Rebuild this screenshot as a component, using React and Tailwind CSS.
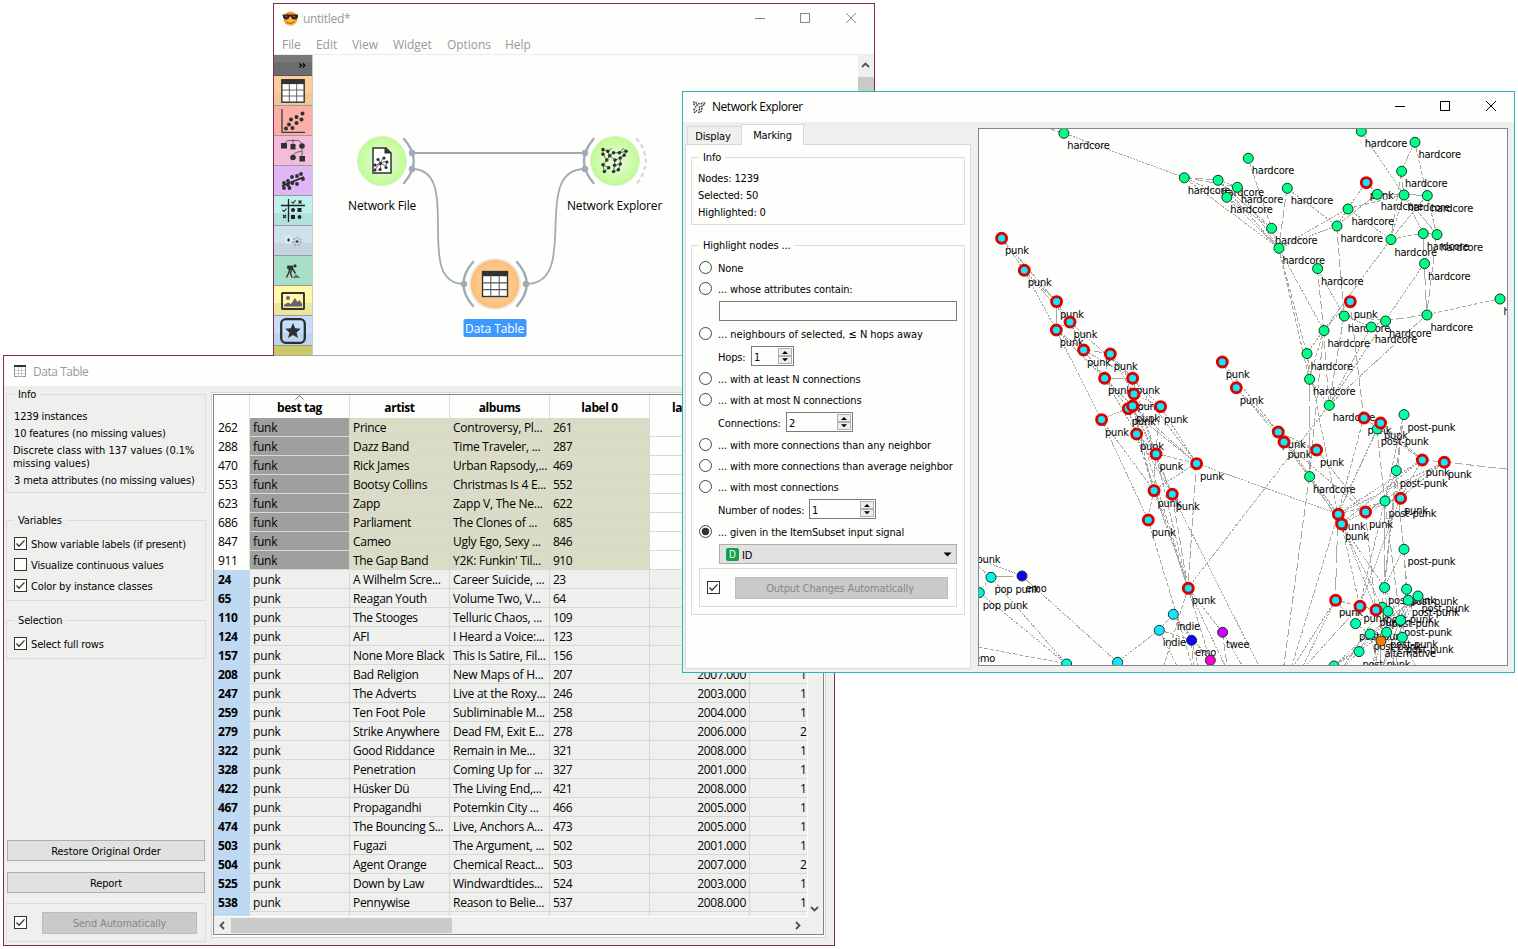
import React from 'react';

const UI = "[font-family:'Open_Sans','Noto_Sans',sans-serif] text-[12px] tracking-[-0.3px]";
const SMALL = "[font-family:'DejaVu_Sans_Condensed','DejaVu_Sans',sans-serif] text-[11px] leading-[13px] tracking-[-0.15px]";

/* ---------- shared controls ---------- */

function WindowButtons({ className }) {
  return (
    <svg width="102" height="12" viewBox="0 0 102 12" fill="none" stroke="currentColor" shapeRendering="crispEdges" className={className}>
      <path d="M0 5.5H10" />
      <rect x="45.5" y="0.5" width="9" height="9" />
      <path d="M91 0L101 10M101 0L91 10" shapeRendering="auto" />
    </svg>
  );
}

function Group({ title, className = '', children }) {
  return (
    <fieldset className={`border border-[#dadcda] ${className}`}>
      <legend className="ml-[7px] h-[14px] px-[4px] leading-[16px]">{title}</legend>
      {children}
    </fieldset>
  );
}

function CheckBox({ checked }) {
  return (
    <svg width="13" height="13" viewBox="0 0 13 13" className="shrink-0">
      <rect x="0.5" y="0.5" width="12" height="12" fill="#fefefd" stroke="#333" />
      {checked && <path d="M2.5 6.5L5 9.2L10.5 3.4" fill="none" stroke="#333" strokeWidth="1.3" />}
    </svg>
  );
}

function CheckRow({ checked, children }) {
  return (
    <div className="flex h-[13px] items-center gap-[4px] whitespace-nowrap">
      <CheckBox checked={checked} />
      <span className="pt-[2px]">{children}</span>
    </div>
  );
}

function RadioRow({ checked, className = '', children }) {
  return (
    <div className={`flex h-[14px] items-center gap-[5px] whitespace-nowrap ${className}`}>
      <svg width="14" height="14" viewBox="0 0 14 14" className="shrink-0">
        <circle cx="6.5" cy="6.5" r="6" fill="#fefefd" stroke="#444" />
        {checked && <circle cx="6.5" cy="6.5" r="3.7" fill="#333" />}
      </svg>
      <span>{children}</span>
    </div>
  );
}

function SpinRow({ label, value, labelClass, boxClass }) {
  return (
    <div className="mt-[5px] flex h-[20px] items-center pl-[19px]">
      <span className={`pt-[2px] whitespace-nowrap ${labelClass}`}>{label}</span>
      <div className={`flex h-[20px] items-center justify-between border border-[#7a7a7a] bg-[#fefefd] pr-px pl-[2px] ${boxClass}`}>
        <span className="pt-[2px]">{value}</span>
        <svg width="14" height="16" viewBox="0 0 14 16">
          <rect x="0.5" y="0.5" width="13" height="7" fill="#eceeec" stroke="#b0b2b0" />
          <rect x="0.5" y="8.5" width="13" height="7" fill="#eceeec" stroke="#b0b2b0" />
          <path d="M4 6L7 3L10 6Z M4 10.2L7 13.2L10 10.2Z" fill="#000" />
        </svg>
      </div>
    </div>
  );
}

/* ---------- icons ---------- */

function TableGlyph({ size }) {
  return (
    <svg width={size} height={size} viewBox="0 0 24 24">
      <rect x="0.8" y="0.8" width="22.4" height="22.4" fill="#fff" stroke="#333" strokeWidth="1.4" />
      <rect x="0.5" y="0.5" width="23" height="4.6" fill="#333" />
      <path d="M8.3 5V23M15.7 5V23M1 11H23M1 17H23" stroke="#555" strokeWidth="0.9" />
    </svg>
  );
}

function Dots({ points, r = 1.8 }) {
  return points.map(([x, y]) => <circle key={`${x},${y}`} cx={x} cy={y} r={r} fill="#2e322e" />);
}

const NET_POINTS = [[2, 1], [7, 3], [2, 6], [9, 7.5], [13, 4.5], [19, 4.5], [26, 3], [6, 12], [14.5, 12], [20, 10], [24, 7], [2, 17], [8, 20], [14, 17.5], [20, 16], [3.5, 24], [13, 24], [18, 22]];

function NetGlyph({ size }) {
  return (
    <svg width={size} height={size} viewBox="0 0 29 26">
      <path d="M2 1L7 3L9 7.5L13 4.5L19 4.5L26 3L24 7L20 10L14.5 12L9 7.5L6 12L2 6L2 1M6 12L2 17L8 20L3.5 24L2 17M14.5 12L14 17.5L20 16L20 10M14 17.5L13 24L18 22L20 16M7 3L11 0M19 4.5L23 0L26 3" fill="none" stroke="#3c403c" strokeWidth="0.8" />
      <Dots points={NET_POINTS} />
    </svg>
  );
}

const TOOLS = [
  { bg: 'bg-linear-to-b from-[#ffcd98] from-60% to-[#f0c795] to-60%', icon: <TableGlyph size={24} /> },
  {
    bg: 'bg-[#fcafa8]',
    icon: (
      <svg width="24" height="24" viewBox="0 0 24 24">
        <path d="M1 0V23.3H24" fill="none" stroke="#3c3c3c" strokeWidth="1.3" />
        <Dots points={[[5, 19.5], [8, 15.5], [11.5, 19], [10, 10.5], [15.5, 14], [15.5, 8], [20.5, 10.5], [21.5, 4.5]]} r={2} />
      </svg>
    ),
  },
  {
    bg: 'bg-[#f5bbdb]',
    icon: (
      <svg width="26" height="25" viewBox="0 0 26 25">
        <path d="M4 7Q5 2.500 10 2.500H17Q21 2.500 22 7M13 1V8M22 8V20M13 18Q14 13.500 22 13.500" fill="none" stroke="#666" />
        <path d="M1 5h6v5.500H1zM10.500 6h5v5.500h-5zM19.500 18h5.500v5.500h-5.500z" fill="#2e322e" />
        <circle cx="22" cy="8" r="2.800" fill="#2e322e" />
        <circle cx="13" cy="19.500" r="2.800" fill="#2e322e" />
      </svg>
    ),
  },
  {
    bg: 'bg-[#dfb6f6]',
    icon: (
      <svg width="24" height="20" viewBox="0 0 24 20">
        <path d="M1 15L23 6" stroke="#222" strokeWidth="1.500" />
        <Dots points={[[3, 12], [3, 17], [7, 10], [8.500, 17], [11, 6], [11.500, 12], [16, 13], [16, 5], [20, 3], [22, 8], [7, 14]]} r={1.9} />
      </svg>
    ),
  },
  {
    bg: 'bg-linear-to-b from-[#bdf1ed] from-60% to-[#b2e2de] to-60%',
    icon: (
      <svg width="24" height="24" viewBox="0 0 24 24">
        <path d="M0 6.500H24M7.500 0V23" stroke="#222" strokeWidth="1.300" />
        <path d="M10.500 2.800l1.500 1.500 2.500-3M1.500 11l1.500 1.500 2.500-3M17.500 1.500l3 3M20.500 1.500l-3 3M2 16l3 3M5 16l-3 3" fill="none" stroke="#222" strokeWidth="1.100" />
        <path d="M16.500 9h4v4h-4zM10 16h4v4h-4z" fill="#222" />
        <circle cx="12" cy="11" r="2" fill="#222" />
        <circle cx="18.500" cy="18" r="1.900" fill="#222" />
      </svg>
    ),
  },
  {
    bg: 'bg-linear-to-b from-[#cde1ed] from-60% to-[#c2d5e1] to-60%',
    icon: (
      <svg width="18" height="16" viewBox="0 0 18 16">
        <circle cx="4.500" cy="6.500" r="3.600" fill="none" stroke="#e4ebee" strokeWidth="2.500" strokeDasharray="2 1.200" />
        <circle cx="13" cy="8.500" r="3.800" fill="none" stroke="#a9b2b8" strokeWidth="2.500" strokeDasharray="1.800 1.600" />
        <path d="M3 7h3M4.500 5.500v3M11.500 8.500h3M13 7v3" stroke="#222" />
      </svg>
    ),
  },
  {
    bg: 'bg-[#a7dfc8]',
    icon: (
      <svg width="16" height="14" viewBox="0 0 16 14">
        <circle cx="10" cy="1.800" r="1.600" fill="#333" />
        <path d="M2.500 1.500L8.500 1.800L8 5.500L5 6.500L1.800 4Z" fill="#333" />
        <path d="M4.500 5L4 8L1.500 13.500M6.500 6L5.500 9L7 13.500M7 4L10.500 9.500" fill="none" stroke="#333" strokeWidth="1.400" />
        <path d="M7.500 14L11 10.200L15.500 14Z" fill="#5e7468" />
      </svg>
    ),
  },
  {
    bg: 'bg-linear-to-b from-[#fef8a8] from-60% to-[#ece79b] to-60%',
    icon: (
      <svg width="24" height="18" viewBox="0 0 24 18">
        <rect x="1" y="1" width="22" height="16" rx="0.500" fill="none" stroke="#333" strokeWidth="1.900" />
        <circle cx="7" cy="6" r="2" fill="#666" />
        <path d="M3 14.500V13L7 10.500L10 12L14 6L16.500 10L18.500 8L21 12V14.500Z" fill="#666" />
      </svg>
    ),
  },
  {
    bg: 'bg-linear-to-b from-[#c8ddfa] from-60% to-[#bed4ef] to-60%',
    icon: (
      <svg width="26" height="26" viewBox="0 0 26 26">
        <rect x="1.200" y="1.200" width="23.600" height="23.600" rx="4.500" fill="none" stroke="#2b2f33" strokeWidth="2.300" />
        <path d="M13 5L15.200 10.300L20.800 10.700L16.500 14.400L17.900 20L13 16.900L8.100 20L9.500 14.400L5.200 10.700L10.800 10.300Z" fill="#2b2f33" />
      </svg>
    ),
  },
];

/* ---------- workflow canvas window ---------- */

function Workflow() {
  return (
    <svg width="545" height="300" viewBox="313 55 545 300" className="shrink-0 text-[12px] [font-family:'Open_Sans','Noto_Sans',sans-serif]">
      <defs>
        <radialGradient id="green"><stop offset="0" stopColor="#e6fadb" /><stop offset="0.600" stopColor="#d3fbb5" /><stop offset="1" stopColor="#bffc90" /></radialGradient>
        <radialGradient id="orange"><stop offset="0" stopColor="#fde3c4" /><stop offset="0.700" stopColor="#fec78a" /><stop offset="1" stopColor="#febf78" /></radialGradient>
      </defs>
      <g fill="none" stroke="#9facb3">
        <path d="M412 153H585" strokeWidth="2.200" />
        <path d="M412 169C464 169 412 284 464 284M526 284C582 284 529 169 585 169" strokeWidth="1.800" />
        <g strokeWidth="2.400" strokeLinecap="round">
          <path d="M404 139Q423.500 161 404 183" />
          <path d="M473 262Q454 284 473 306" />
          <path d="M517 262Q536.500 284 517 306" />
          <path d="M593.500 139Q574.500 161 593.500 183" />
          <path d="M637 139Q654.500 161 637 183" stroke="#d9dbd9" strokeDasharray="2.500 5" />
        </g>
      </g>
      <g fill="#9facb3">
        <circle cx="412" cy="153" r="3.200" /><circle cx="412" cy="169" r="3.200" />
        <circle cx="585" cy="153" r="3.200" /><circle cx="585" cy="169" r="3.200" />
        <circle cx="464" cy="284" r="3.200" /><circle cx="526" cy="284" r="3.200" />
      </g>
      <circle cx="382" cy="161" r="24.500" fill="url(#green)" stroke="#d9e8d0" strokeWidth="0.800" />
      <circle cx="615" cy="161" r="24.500" fill="url(#green)" stroke="#d9e8d0" strokeWidth="0.800" />
      <circle cx="495" cy="284" r="26" fill="#e9eae8" />
      <circle cx="495" cy="284" r="24.300" fill="url(#orange)" />
      <g transform="translate(372 147)">
        <path d="M1 1H14L19 6V26H1Z" fill="#fff" stroke="#333" strokeWidth="1.500" />
        <path d="M12.500 0.500V6.500H19.500Z" fill="#333" />
        <path d="M3 19L8 16L6 12M8 16L12 10M8 16L14 19L15 14L8 16L9 23M2 24L8 16" stroke="#444" strokeWidth="0.800" fill="none" />
        <Dots points={[[6, 12.500], [12, 11], [8.500, 16.500], [15, 15], [3, 18], [8, 22.500], [14, 20.500], [3, 23]]} r={1.600} />
      </g>
      <g transform="translate(601 147)"><NetGlyph size={28} /></g>
      <g transform="translate(481.500 270.500)"><TableGlyph size={27} /></g>
      <rect x="463.500" y="319" width="63" height="18" rx="2" fill="#3d99fe" />
      <g textAnchor="middle">
        <text x="382" y="210" textLength="68">Network File</text>
        <text x="614.500" y="210" textLength="95">Network Explorer</text>
        <text x="494.500" y="333" fill="#fff" textLength="59">Data Table</text>
      </g>
    </svg>
  );
}

function CanvasWindow() {
  return (
    <section className={`absolute top-[3px] left-[273px] flex h-[400px] w-[602px] flex-col border border-[#862950] bg-[#fefefd] text-[#999] ${UI}`}>
      <header className="flex h-[30px] shrink-0 items-center pr-[17px] pl-[8px]">
        <svg width="17" height="17" viewBox="0 0 17 17" className="-mt-px">
          <circle cx="8.500" cy="8.500" r="7" fill="#f59a22" />
          <circle cx="9" cy="11" r="4.500" fill="#fcb540" />
          <path d="M0.500 4.500H16V7Q15 10 12 9.500Q9.500 9 9 6.500H7.500Q7 9.500 4 9.500Q1 9 0.500 4.500Z" fill="#2a2018" />
          <path d="M3 5.500l2 2M11 5.500l2 2" stroke="#9ab" />
          <path d="M5 12.500Q9 15 12.500 11.500" fill="none" stroke="#a04a10" />
        </svg>
        <span className="ml-[4px] grow tracking-[-0.3px]">untitled*</span>
        <WindowButtons className="text-[#888]" />
      </header>
      <nav className="flex h-[21px] shrink-0 items-center border-b border-[#ececec] pt-[2px] pl-[8px] tracking-[-0.05px]">
        <span className="w-[34px]">File</span>
        <span className="w-[36px]">Edit</span>
        <span className="w-[41px]">View</span>
        <span className="w-[54px]">Widget</span>
        <span className="w-[58px]">Options</span>
        <span>Help</span>
      </nav>
      <div className="flex min-h-0 grow">
        <aside className="flex w-[39px] shrink-0 flex-col border-r border-[#cacccb] bg-[#ccc866]">
          <div className="flex h-[21px] shrink-0 items-center justify-end border-b border-[#555] bg-linear-to-b from-[#787a78] from-35% to-[#696d6d] to-35% pr-[6px]">
            <svg width="7" height="5" viewBox="0 0 7 5" fill="none" stroke="#000" strokeWidth="1.200"><path d="M0.500 0.500L2.500 2.500L0.500 4.500M3.800 0.500L5.800 2.500L3.800 4.500" /></svg>
          </div>
          {TOOLS.map((tool, i) => (
            <div key={i} className={`flex h-[30px] shrink-0 items-center justify-center border-b border-[#9a9c9a] ${tool.bg}`}>{tool.icon}</div>
          ))}
        </aside>
        <Workflow />
        <div className="flex grow flex-col items-center bg-[#eff0ee]">
          <div className="flex h-[22px] shrink-0 items-center pr-px pb-[3px]">
            <svg width="9" height="6" viewBox="0 0 9 6" fill="none" stroke="#505250" strokeWidth="1.800"><path d="M1 5L4.500 1.500L8 5" /></svg>
          </div>
          <div className="mr-px h-[200px] w-full bg-[#c8cac8]" />
        </div>
      </div>
    </section>
  );
}

/* ---------- data table window ---------- */

const ROWS = [
  [262, 'funk', 'Prince', 'Controversy, Pl...', 261, '', ''],
  [288, 'funk', 'Dazz Band', 'Time Traveler, ...', 287, '', ''],
  [470, 'funk', 'Rick James', 'Urban Rapsody,...', 469, '', ''],
  [553, 'funk', 'Bootsy Collins', 'Christmas Is 4 E...', 552, '', ''],
  [623, 'funk', 'Zapp', 'Zapp V, The Ne...', 622, '', ''],
  [686, 'funk', 'Parliament', 'The Clones of ...', 685, '', ''],
  [847, 'funk', 'Cameo', 'Ugly Ego, Sexy ...', 846, '', ''],
  [911, 'funk', 'The Gap Band', "Y2K: Funkin' Til...", 910, '', ''],
  [24, 'punk', 'A Wilhelm Scre...', 'Career Suicide, ...', 23, '', ''],
  [65, 'punk', 'Reagan Youth', 'Volume Two, V...', 64, '', ''],
  [110, 'punk', 'The Stooges', 'Telluric Chaos, ...', 109, '', ''],
  [124, 'punk', 'AFI', 'I Heard a Voice:...', 123, '', ''],
  [157, 'punk', 'None More Black', 'This Is Satire, Fil...', 156, '', ''],
  [208, 'punk', 'Bad Religion', 'New Maps of H...', 207, '2007.000', 1],
  [247, 'punk', 'The Adverts', 'Live at the Roxy...', 246, '2003.000', 1],
  [259, 'punk', 'Ten Foot Pole', 'Subliminable M...', 258, '2004.000', 1],
  [279, 'punk', 'Strike Anywhere', 'Dead FM, Exit E...', 278, '2006.000', 2],
  [322, 'punk', 'Good Riddance', 'Remain in Me...', 321, '2008.000', 1],
  [328, 'punk', 'Penetration', 'Coming Up for ...', 327, '2001.000', 1],
  [422, 'punk', 'Hüsker Dü', 'The Living End,...', 421, '2008.000', 1],
  [467, 'punk', 'Propagandhi', 'Potemkin City ...', 466, '2005.000', 1],
  [474, 'punk', 'The Bouncing S...', 'Live, Anchors A...', 473, '2005.000', 1],
  [503, 'punk', 'Fugazi', 'The Argument, ...', 502, '2001.000', 1],
  [504, 'punk', 'Agent Orange', 'Chemical React...', 503, '2007.000', 2],
  [525, 'punk', 'Down by Law', 'Windwardtides...', 524, '2003.000', 1],
  [538, 'punk', 'Pennywise', 'Reason to Belie...', 537, '2008.000', 1],
  ['', 'none', '', '', '', '', ''],
];

const CELL = 'w-[100px] shrink-0 overflow-hidden whitespace-nowrap border-r border-b border-[#d6d8d6] pl-[3px]';

function TableRow({ row }) {
  const [id, tag, artist, albums, label, year, last] = row;
  const funk = tag === 'funk';
  const tint = funk ? 'bg-[#dadcc6]' : '';
  const plain = funk ? 'bg-[#fefefd]' : '';
  return (
    <div className="flex h-[19px] shrink-0 leading-[20px]">
      <div className={`w-[36px] shrink-0 border-r pl-[4px] leading-[19px] ${funk ? 'border-[#dddfdd] bg-[#fefefd]' : 'border-[#bfd9f3] bg-[#bfd9f3] font-bold'}`}>{id}</div>
      <div className={`${CELL} tracking-[-0.15px] ${funk ? 'bg-[#9ea09d]' : ''}`}>{tag === 'none' ? '' : tag}</div>
      <div className={`${CELL} ${tint}`}>{artist}</div>
      <div className={`${CELL} tracking-[-0.25px] ${tint}`}>{albums}</div>
      <div className={`${CELL} tracking-[-0.5px] ${tint}`}>{label}</div>
      <div className={`${CELL} pr-[3px] text-right ${plain}`}>{year}</div>
      <div className={`w-[57px] shrink-0 overflow-hidden border-b border-[#d6d8d6] pl-[50px] ${plain}`}>{last}</div>
    </div>
  );
}

function HeaderCell({ children, className = 'text-center' }) {
  return <div className={`w-[100px] shrink-0 border-r border-[#dcdedc] pt-[2px] ${className}`}>{children}</div>;
}

function DataTableWindow() {
  return (
    <section className="absolute top-[355px] left-[3px] flex h-[591px] w-[832px] flex-col border border-[#862950] bg-[#eff0ee] text-black">
      <header className={`flex h-[30px] shrink-0 items-center gap-[7px] bg-[#fefefd] pl-[10px] text-[#999] ${UI}`}>
        <svg width="12" height="12" viewBox="0 0 12 12" shapeRendering="crispEdges">
          <rect x="0.500" y="0.500" width="11" height="11" fill="#fff" stroke="#999" />
          <path d="M4.500 2V12M7.500 2V12M1 5.500H11M1 8.500H11" stroke="#ccc" />
          <rect width="12" height="2" fill="#333" />
        </svg>
        <span className="pt-px tracking-[-0.45px]">Data Table</span>
      </header>
      <div className="flex min-h-0 grow">
        <aside className={`flex w-[207px] shrink-0 flex-col pt-px pr-[5px] pb-[3px] pl-[2px] ${SMALL}`}>
          <Group title="Info" className="h-[106px] w-[200px]">
            <div className="flex flex-col gap-[4px] pt-[9px] pl-[7px] whitespace-nowrap">
              <p>1239 instances</p>
              <p>10 features (no missing values)</p>
              <p className="-ml-px tracking-[-0.02px]">Discrete class with 137 values (0.1%<br />missing values)</p>
              <p>3 meta attributes (no missing values)</p>
            </div>
          </Group>
          <Group title="Variables" className="mt-[20px] h-[88px] w-[200px]">
            <div className="flex flex-col gap-[8px] pt-[10px] pl-[7px]">
              <CheckRow checked>Show variable labels (if present)</CheckRow>
              <CheckRow>Visualize continuous values</CheckRow>
              <CheckRow checked>Color by instance classes</CheckRow>
            </div>
          </Group>
          <Group title="Selection" className="mt-[12px] h-[46px] w-[200px]">
            <div className="pt-[10px] pl-[7px]">
              <CheckRow checked>Select full rows</CheckRow>
            </div>
          </Group>
          <div className="grow" />
          <button className="ml-px h-[21px] w-[198px] border border-[#adafad] bg-[#e0e2e0] pt-[2px] tracking-[-0.05px]">Restore Original Order</button>
          <button className="mt-[11px] ml-px h-[21px] w-[198px] border border-[#adafad] bg-[#e0e2e0] pt-[2px]">Report</button>
          <div className="mt-[10px] flex h-[39px] w-[200px] items-center border border-[#dadcda] pl-[7px]">
            <CheckBox checked />
            <button className="ml-[15px] h-[22px] w-[155px] border border-[#bbbdbb] bg-[#c9cbc9] pt-[2px] text-[#858785]">Send Automatically</button>
          </div>
        </aside>
        <div className="mt-[6px] h-[546px] w-[615px] border border-[#d4d6d4] bg-[#fefefd] p-px">
          <div className="flex h-[541px] w-[611px] flex-col border border-[#7f858c] bg-[#eff0ee]">
            <div className={`flex h-[522px] ${UI}`}>
              <div className="flex w-[593px] flex-col overflow-hidden border-b border-[#fefefd]">
                <div className="flex h-[23px] shrink-0 bg-[#fefefd] leading-[21px] font-bold tracking-[-0.4px]">
                  <div className="w-[36px] shrink-0 border-r border-[#dcdedc]" />
                  <div className="flex w-[100px] shrink-0 flex-col items-center border-r border-[#dcdedc]">
                    <svg width="9" height="5" viewBox="0 0 9 5" fill="none" stroke="#777" className="shrink-0"><path d="M0.500 4.500L4.500 0.500L8.500 4.500" /></svg>
                    <span className="-mt-[3px]">best tag</span>
                  </div>
                  <HeaderCell>artist</HeaderCell>
                  <HeaderCell>albums</HeaderCell>
                  <HeaderCell>label 0</HeaderCell>
                  <HeaderCell className="pl-[22px] text-left">las</HeaderCell>
                </div>
                {ROWS.map((row, i) => <TableRow key={i} row={row} />)}
              </div>
              <div className="flex grow flex-col items-center justify-end border-l border-[#fefefd] pr-[2px] pb-[5px]">
                <svg width="9" height="6" viewBox="0 0 9 6" fill="none" stroke="#505250" strokeWidth="1.800"><path d="M1 1L4.500 4.500L8 1" /></svg>
              </div>
            </div>
            <div className="flex h-[17px] items-center">
              <svg width="17" height="9" viewBox="0 0 17 9" fill="none" stroke="#505250" strokeWidth="1.800"><path d="M10 1L6.500 4.500L10 8" /></svg>
              <div className="h-[15px] w-[221px] bg-[#c9cbc8]" />
              <div className="grow" />
              <svg width="31" height="9" viewBox="0 0 31 9" fill="none" stroke="#505250" strokeWidth="1.800"><path d="M4 1L7.500 4.500L4 8" /></svg>
            </div>
          </div>
        </div>
      </div>
    </section>
  );
}

/* ---------- network graph ---------- */

const GREEN = '#00ff84';
const TEAL = '#00ffb0';
const N = {
  a0: [1063.6, 133], a1: [1184, 177.500], a2: [1217.800, 180], a3: [1237, 187], a4: [1226.500, 197], a5: [1248, 158],
  a6: [1361, 131], a7: [1414.700, 142], a8: [1401.300, 171], a9: [1377, 194], a10: [1403.700, 194.700], a11: [1427, 195.300],
  a12: [1347.700, 208.700], a13: [1336.700, 225.700], a14: [1390.700, 239.300], a15: [1423, 233.300], a16: [1436.700, 234.300],
  a17: [1287, 188], a18: [1271.300, 228], a19: [1278.700, 248], a20: [1317.300, 268.300], a21: [1424.300, 263.300],
  a22: [1344, 315.700], a23: [1371, 326.700], a24: [1385.300, 320.700], a25: [1426.700, 314.700], a26: [1499.700, 298.700],
  a27: [1323.700, 330.300], a28: [1306.700, 353.300], a29: [1309.300, 379], a30: [1329, 405], a31: [1309.300, 476.300],
  t0: [1403.700, 414.300], t1: [1377, 428.700], t2: [1396, 470.300], t3: [1384.700, 500.700], t4: [1403.700, 549],
  t5: [1384.300, 587.300], t6: [1406.300, 589], t7: [1417.700, 595.700], t8: [1408, 600], t9: [1382, 607], t10: [1387.700, 611],
  t11: [1355.300, 623.300], t12: [1400.300, 620], t13: [1369.700, 633.700], t14: [1386.300, 632], t15: [1402, 637],
  t16: [1358.700, 651.300], t17: [1333.700, 665.700],
  p0: [1001.300, 238], p1: [1024, 270], p2: [1056.300, 301.300], p3: [1069.700, 321.700], p4: [1056, 329.700], p5: [1083.300, 349.700],
  p6: [1110, 353.700], p7: [1104.300, 378], p8: [1132.300, 378], p9: [1133.700, 393.700], p10: [1128, 408.300], p11: [1132.300, 405.700],
  p12: [1101.300, 419.300], p13: [1160.300, 406.300], p14: [1136.300, 433.700], p15: [1155.700, 453.700], p16: [1196.300, 463.300],
  p17: [1153.700, 490.300], p18: [1172, 494], p19: [1148, 519.700], p20: [1188, 588], p21: [1222, 361.700], p22: [1236, 387.500],
  p23: [1278, 431.700], p24: [1283.700, 441.700], p25: [1316.300, 449.700], p26: [1363.700, 417.700], p27: [1380.300, 422.700],
  p28: [1422, 459.700], p29: [1444, 462], p30: [1400.300, 498], p31: [1365.300, 511.700], p32: [1338, 514], p33: [1341.300, 523.700],
  p34: [1335.300, 600], p35: [1359.700, 606], p36: [1375.700, 609.700], p37: [1366, 182.300], p38: [1350, 301.300],
  o0: [990.700, 577], o1: [979, 592.300], o2: [1021.700, 575.700], o3: [1066.300, 663.700], o4: [1117.300, 662], o5: [1173, 614],
  o6: [1159, 630], o7: [1191.300, 640], o8: [1222.300, 632], o9: [1210, 660], o10: [1380.700, 640.700],
  x0: [1040, 126], x1: [970, 560], x2: [972, 646], x3: [1162, 672], x4: [1200, 672], x5: [1262, 672], x6: [1228, 672], x7: [1510, 469.500],
  x8: [1283, 672], x9: [1290, 672], x10: [1300, 672], x11: [1340, 672], x12: [1370, 672], x13: [1395, 672], x14: [1418, 672], x15: [1380, 672],
  x16: [1194, 672], x17: [1228, 672], x18: [1180, 672], x19: [960, 552], x20: [1246, 672],
};

const OTHER = {
  o0: ['#00f5e6', 'pop punk'], o1: ['#00f5d8', 'pop punk'], o2: ['#1400ff', 'emo'], o3: ['#00ffe0', ''], o4: ['#18e4ff', ''],
  o5: ['#18e4ff', 'indie'], o6: ['#18e4ff', 'indie'], o7: ['#1400ff', 'emo'], o8: ['#cf00ff', 'twee'], o9: ['#ff00cc', ''], o10: ['#ff7800', 'alternative'],
};

const EDGES = `x0-a0 a0-a1 a1-a2 a1-a3 a1-a4 a1-a19 a2-a3 a2-a19 a3-a19 a4-a19 a2-a18 a4-a18 a5-a18 a17-a19 a17-a13 a19-a12 a19-a13
a12-p37 a12-a10 a12-a14 a13-a9 a13-a12 a6-a10 a7-a8 a7-a11 a8-a10 a9-a10 a10-a11 a9-p37 a10-a14 a10-a16 a11-a14 a11-a16 a8-a14 a14-a15
a15-a16 a15-a21 a21-a25 a16-a25 a21-a24 a10-a15 a14-a27 a13-a22 a20-a22 a20-a27 a19-a27 a19-a28 a19-a29 p38-a27 p38-p26 a22-a24 a22-a23
a23-a24 a23-a30 a24-a30 a24-a25 a25-a26 a25-a30 a22-a30 a27-a28 a27-a29 a27-a30 a28-a29 a28-p32 a29-a31 a29-a30 a30-p20 a27-a31 a19-a18
p0-p1 p0-p2 p1-p2 p1-p4 p1-p3 p2-p4 p2-p3 p3-p4 p3-p8 p3-p5 p4-p5 p4-p7 p4-p12 p5-p7 p5-p8 p5-p10 p5-p6 p6-p8 p6-p7 p6-p9 p7-p8 p7-p11
p7-p14 p8-p9 p8-p16 p9-p13 p9-p10 p9-p14 p10-p12 p10-p14 p11-p16 p11-p13 p10-p16 p11-p15 p11-p18 p9-p15 p8-p15 p8-p13 p12-p17 p12-p19
p13-p16 p13-p15 p14-p15 p14-p17 p14-p18 p15-p16 p15-p17 p15-p18 p15-p20 p16-p17 p16-p20 p17-p19 p17-p20 p14-p20 p18-p20 p16-p32 p18-x5
p19-x16 p11-p17 p11-p20 p21-p22 p21-p23 p22-p23 p22-p24 p23-p24 p23-p25 p24-p25 p24-a31 p23-p32 p24-p33 p24-p31 p25-p31 a31-p32 a31-p33
a31-x8 p26-p32 p27-p32 p26-p27 p27-p28 p26-p28 p28-p29 p28-p32 p28-p33 p29-p32 p29-p31 p28-p30 p29-x7 p29-p30 p30-p31 p30-p32 t3-p31
p31-p33 p32-p33 t0-t2 t0-t3 t1-t3 t1-p32 t1-p27 t2-t3 t2-t5 t2-t4 t3-t5 t3-t12 t4-t5 t4-t6 t4-t8 p32-p34 p32-x9 p33-t9 p33-p35 p33-t5
p31-p36 p30-p35 t3-p35 t0-t5 p32-p36 p34-p35 p35-p36 p34-x10 p34-t11 p35-t11 p36-t11 t5-t9 t5-t10 t5-t12 t6-t8 t7-t8 t7-t12 t8-t10 t9-t10
t10-t12 t10-t14 t11-t13 t12-t14 t12-t15 t13-t14 t14-t15 t13-t16 t14-t16 t16-t17 t13-t17 t12-t13 t12-t17 t7-t13 t8-t14 t6-t12 t8-t15
t15-o10 t14-o10 t13-o10 t16-x11 t14-x12 t12-x13 t15-x14 t10-x12 t8-x15 t7-x15 o10-x15 t9-x11 t6-x13 t13-x15 t14-x13 t10-x13 t12-x15
o1-o0 o0-o2 o2-x19 o0-x1 o2-o4 o0-o3 o1-o3 x2-o3 o4-o6 o5-o6 p20-x3 p20-o8 p20-o9 p20-x6 o5-o7 o5-o9 o6-o7 o6-x18 o7-x4 o7-x16 o8-x17
o8-x20 o7-o9 p34-x9 p35-x10`.split(/\s+/).map((e) => e.split('-'));

function dash([x1, y1], [x2, y2]) {
  const dx = Math.abs(x2 - x1);
  const dy = Math.abs(y2 - y1);
  const slope = Math.min(dx, dy) / Math.max(dx, dy, 1);
  if (slope < 0.06) return '22 5';
  if (slope < 0.18) return '8 3';
  if (slope < 0.35) return '4 2';
  return '2.200 1';
}

function nodeStyle(id) {
  if (id[0] === 'a') return [GREEN, 'hardcore'];
  if (id[0] === 't') return [TEAL, id === 't17' ? '' : 'post-punk'];
  if (id[0] === 'p') return ['#00f0ff', 'punk'];
  return OTHER[id];
}

function Graph() {
  const ids = Object.keys(N).filter((id) => id[0] !== 'x');
  return (
    <svg width="528" height="536" viewBox="979 129 528 536" className="[font-family:'DejaVu_Sans_Condensed','DejaVu_Sans',sans-serif] text-[11px] tracking-[-0.18px]">
      <g stroke="#a8a8a8" strokeWidth="1" shapeRendering="crispEdges">
        {EDGES.map(([a, b]) => (
          <line key={`${a}-${b}`} x1={N[a][0]} y1={N[a][1]} x2={N[b][0]} y2={N[b][1]} strokeDasharray={dash(N[a], N[b])} />
        ))}
      </g>
      <g fill="#000">
        {ids.map((id) => <text key={id} x={N[id][0] + 3.700} y={N[id][1] + 16.300}>{nodeStyle(id)[1]}</text>)}
        <text x="976.500" y="563">punk</text>
        <text x="974" y="662">emo</text>
      </g>
      {ids.map((id) => {
        const marked = id[0] === 'p';
        return (
          <circle key={id} cx={N[id][0] + 0.300} cy={N[id][1] + 0.300} r={marked ? 5 : 5} fill={nodeStyle(id)[0]} stroke={marked ? '#e00000' : '#0c3a28'} strokeWidth={marked ? 2.900 : 1} />
        );
      })}
    </svg>
  );
}

function ExplorerWindow() {
  return (
    <section className="absolute top-[91px] left-[682px] flex h-[582px] w-[833px] flex-col border border-[#2eb4be] bg-[#eff0ee] text-black">
      <header className={`flex h-[30px] shrink-0 items-center bg-[#fefefd] pr-[17px] pl-[10px] ${UI}`}>
        <NetGlyph size={13} />
        <span className="ml-[6px] grow tracking-[-0.45px]">Network Explorer</span>
        <WindowButtons className="text-black" />
      </header>
      <div className={`flex min-h-0 grow ${SMALL}`}>
        <div className="flex w-[295px] shrink-0 flex-col pl-[2px]">
          <div className="z-10 -mb-px flex h-[23px] shrink-0 items-end pl-[2px]">
            <div className="h-[19px] w-[54px] border border-r-0 border-[#d8dad8] pt-[3px] pr-[3px] text-center">Display</div>
            <div className="h-[21px] w-[63px] border border-b-0 border-[#d8dad8] bg-[#fefefd] pt-[4px] text-center">Marking</div>
          </div>
          <div className="h-[525px] w-[286px] border border-[#d8dad8] bg-[#fefefd] pt-[5px] pl-[5px]">
            <Group title="Info" className="h-[75px] w-[274px]">
              <div className="flex flex-col gap-[4px] pt-[8px] pl-[6px]">
                <p>Nodes: 1239</p>
                <p>Selected: 50</p>
                <p>Highlighted: 0</p>
              </div>
            </Group>
            <Group title="Highlight nodes ..." className="mt-[13px] h-[377px] w-[274px]">
              <div className="pt-[9px] pl-[7px]">
                <RadioRow>None</RadioRow>
                <RadioRow className="mt-[7px]">... whose attributes contain:</RadioRow>
                <div className="mt-[5px] ml-[20px] h-[20px] w-[238px] border border-[#7a7a7a]" />
                <RadioRow className="mt-[6px] tracking-[-0.05px]">... neighbours of selected, ≤ N hops away</RadioRow>
                <SpinRow label="Hops:" value="1" labelClass="w-[33px]" boxClass="w-[43px]" />
                <RadioRow className="mt-[6px]">... with at least N connections</RadioRow>
                <RadioRow className="mt-[7px]">... with at most N connections</RadioRow>
                <SpinRow label="Connections:" value="2" labelClass="w-[68px]" boxClass="w-[67px]" />
                <RadioRow className="mt-[6px]">... with more connections than any neighbor</RadioRow>
                <RadioRow className="mt-[7px]">... with more connections than average neighbor</RadioRow>
                <RadioRow className="mt-[7px]">... with most connections</RadioRow>
                <SpinRow label="Number of nodes:" value="1" labelClass="w-[91px]" boxClass="w-[67px]" />
                <RadioRow checked className="mt-[6px]">... given in the ItemSubset input signal</RadioRow>
                <div className="mt-[5px] ml-[20px] flex h-[20px] w-[238px] items-center border border-[#adafad] bg-[#e0e2e0] pr-[4px] pl-[6px]">
                  <span className="flex size-[13px] items-center justify-center rounded-[2px] bg-[#18a048] text-[10px] text-white">D</span>
                  <span className="ml-[3px] grow pt-[2px]">ID</span>
                  <svg width="9" height="5" viewBox="0 0 9 5"><path d="M0.500 0.500H8.500L4.500 4.500Z" fill="#000" /></svg>
                </div>
                <div className="mt-[4px] flex h-[39px] w-[258px] items-center border border-[#dadcda] pl-[7px]">
                  <CheckBox checked />
                  <button className="ml-[15px] h-[22px] w-[213px] border border-[#bbbdbb] bg-[#c9cbc9] pt-[2px] pr-[3px] text-[#858785]">Output Changes Automatically</button>
                </div>
              </div>
            </Group>
          </div>
        </div>
        <div className="mt-[6px] h-[538px] w-[530px] overflow-hidden border border-[#7f868f] bg-[#fefefd]">
          <Graph />
        </div>
      </div>
    </section>
  );
}

export default function App() {
  return (
    <main className="relative h-[949px] w-[1518px] overflow-hidden bg-white">
      <CanvasWindow />
      <DataTableWindow />
      <div className="absolute top-[355px] left-[274px] h-px w-[408px] bg-[#a9aba9]" />
      <ExplorerWindow />
    </main>
  );
}
